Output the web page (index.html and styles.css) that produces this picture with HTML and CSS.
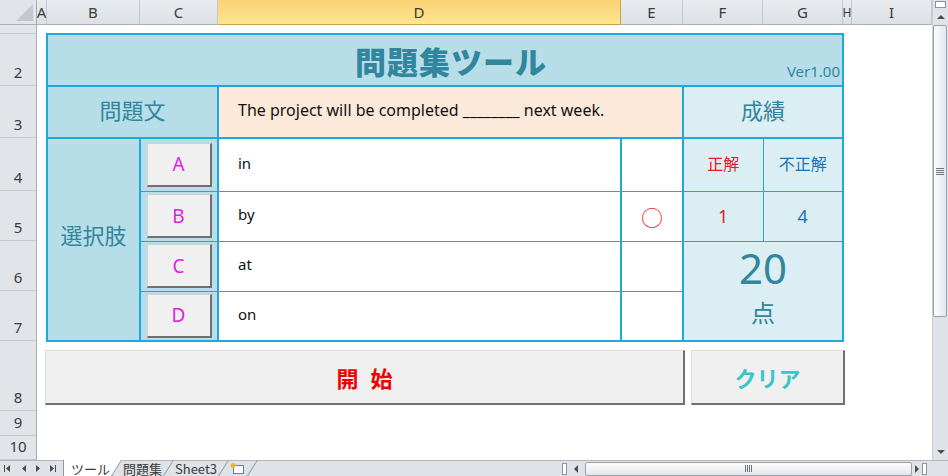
FILE: index.html
```html
<!DOCTYPE html>
<html lang="ja">
<head>
    <meta charset="UTF-8">
    <title>問題集ツール</title>
    <link rel="stylesheet" href="styles.css">
</head>
<body>
    <div class="window">
        <div class="sheet">
            <!-- column headers -->
            <div class="corner"><span class="corner-tri"></span></div>
            <div class="col-head">A</div>
            <div class="col-head">B</div>
            <div class="col-head">C</div>
            <div class="col-head active">D</div>
            <div class="col-head">E</div>
            <div class="col-head">F</div>
            <div class="col-head">G</div>
            <div class="col-head narrow">H</div>
            <div class="col-head">I</div>

            <!-- row headers -->
            <div class="row-head"></div>
            <div class="row-head">2</div>
            <div class="row-head">3</div>
            <div class="row-head">4</div>
            <div class="row-head">5</div>
            <div class="row-head">6</div>
            <div class="row-head">7</div>
            <div class="row-head">8</div>
            <div class="row-head">9</div>
            <div class="row-head">10</div>

            <table class="tool">
                <colgroup>
                    <col style="width: 93px">
                    <col style="width: 78px">
                    <col style="width: 403px">
                    <col style="width: 62px">
                    <col style="width: 80px">
                    <col style="width: 80px">
                </colgroup>
                <tr class="r-title">
                    <td colspan="6" class="title-cell">
                        <div class="title-box">
                            <span class="title">問題集ツール</span>
                            <span class="ver">Ver1.00</span>
                        </div>
                    </td>
                </tr>
                <tr class="r-question">
                    <td colspan="2" class="label thick">問題文</td>
                    <td colspan="2" class="question thick">The project will be completed ________ next week.</td>
                    <td colspan="2" class="label light">成績</td>
                </tr>
                <tr class="r-opt first">
                    <td rowspan="4" class="label choices thick">選択肢</td>
                    <td class="pick-cell thick"><button class="pick">A</button></td>
                    <td class="answer thick">in</td>
                    <td class="mark thick"></td>
                    <td class="result ok">正解</td>
                    <td class="result ng">不正解</td>
                </tr>
                <tr class="r-opt">
                    <td class="pick-cell thick"><button class="pick">B</button></td>
                    <td class="answer thick">by</td>
                    <td class="mark thick">○</td>
                    <td class="result ok count">1</td>
                    <td class="result ng count">4</td>
                </tr>
                <tr class="r-opt">
                    <td class="pick-cell thick"><button class="pick">C</button></td>
                    <td class="answer thick">at</td>
                    <td class="mark thick"></td>
                    <td rowspan="2" colspan="2" class="score">
                        <div class="score-box">
                            <span class="score-num">20</span>
                            <span class="score-unit">点</span>
                        </div>
                    </td>
                </tr>
                <tr class="r-opt">
                    <td class="pick-cell thick"><button class="pick">D</button></td>
                    <td class="answer thick">on</td>
                    <td class="mark thick"></td>
                </tr>
            </table>

            <div class="action-bar">
                <button class="big-button start">開始</button>
                <button class="big-button clear">クリア</button>
            </div>
        </div>

        <div class="vscroll">
            <div class="split-v"></div>
            <div class="arrow-box"><span class="tri-up"></span></div>
            <div class="thumb-v"><span class="grip-v"></span></div>
            <div class="track"></div>
            <div class="arrow-box"><span class="tri-down"></span></div>
        </div>
    </div>

    <div class="tabbar">
        <svg class="tab-nav" width="62" height="16" viewBox="0 0 62 16">
            <g fill="#4a4a4a">
                <rect x="4" y="5" width="1" height="7"/>
                <path d="M10 5v7l-4-3.5z"/>
                <path d="M26 5v7l-4-3.5z"/>
                <path d="M36 5v7l4-3.5z"/>
                <path d="M50 5v7l4-3.5z"/>
                <rect x="55" y="5" width="1" height="7"/>
            </g>
        </svg>
        <div class="tabs">
            <span class="tab active">ツール</span>
            <span class="tab">問題集</span>
            <span class="tab">Sheet3</span>
            <span class="tab new-tab">
                <svg width="16" height="13" viewBox="0 0 16 13">
                    <rect x="4.5" y="3.5" width="10" height="8" fill="#fff" stroke="#6a7f95"/>
                    <circle cx="4" cy="3.5" r="2.5" fill="#f2b632"/>
                </svg>
            </span>
        </div>
        <div class="hscroll">
            <span class="split-h"></span>
            <span class="arrow-h"><span class="tri-left"></span></span>
            <span class="thumb-h"><span class="grip-h"></span></span>
            <span class="track"></span>
            <span class="arrow-h small"><span class="tri-right"></span></span>
            <span class="split-h end"></span>
        </div>
        <div class="scroll-corner"></div>
    </div>
</body>
</html>
```

FILE: styles.css
```css
* {
    box-sizing: border-box;
}

html, body {
    margin: 0;
    padding: 0;
}

body {
    width: 948px;
    height: 476px;
    overflow: hidden;
    background: #fff;
    font-family: "Noto Sans", "Noto Sans CJK JP", sans-serif;
    color: #222;
}

.window {
    display: flex;
    height: 460px;
}

/* spreadsheet grid */
.sheet {
    flex: 1;
    display: grid;
    grid-template-columns: 37px 10px 93px 78px 403px 62px 80px 80px 9px 1fr;
    grid-template-rows: 25px 9px 52px 52px 53px 50px 50px 50px 70px 25px 24px;
    background: #fff;
}

.corner {
    display: flex;
    align-items: flex-end;
    justify-content: flex-end;
    padding: 0 3px 3px 0;
    background: #e1e4e9;
    border-right: 1px solid #a9afb7;
    border-bottom: 1px solid #a9afb7;
}

.corner-tri {
    width: 0;
    height: 0;
    border-left: 17px solid transparent;
    border-bottom: 17px solid #c3c7cd;
}

.col-head {
    display: flex;
    align-items: center;
    justify-content: center;
    overflow: hidden;
    background: linear-gradient(#e8ebef, #dde1e6);
    border-right: 1px solid #c3c8cf;
    border-bottom: 1px solid #a9afb7;
    font-size: 15px;
    color: #3b3b3b;
}

.col-head.narrow {
    font-size: 12px;
}

.col-head.active {
    background: linear-gradient(#f9d275, #fee690);
    border-right-color: #c9a24a;
    border-bottom-color: #c9a24a;
}

.row-head {
    grid-column: 1;
    display: flex;
    align-items: flex-end;
    justify-content: center;
    padding-bottom: 3px;
    line-height: 20px;
    background: #e1e4e9;
    border-right: 1px solid #a9afb7;
    border-bottom: 1px solid #c6cad0;
    font-size: 15px;
    color: #3b3b3b;
}

/* the tool form */
.tool {
    grid-column: 3 / 9;
    grid-row: 3 / 9;
    width: calc(100% + 2px);
    margin: -1px 0 0 -1px;
    border-collapse: collapse;
    table-layout: fixed;
    border: 2px solid #1ea8dc;
}

.tool td {
    padding: 0;
    border: 1px solid #1ea8dc;
}

.tool td.thick {
    border-right-width: 2px;
}

.r-title td,
.r-question td {
    border-bottom-width: 2px;
}

.r-title { height: 52px; }
.r-question { height: 52px; }
.r-opt { height: 50px; }
.r-opt.first { height: 53px; }

.title-cell {
    background: #b7dee8;
}

.title-box {
    display: grid;
    height: 50px;
}

.title-box > span {
    grid-area: 1 / 1;
}

.title {
    justify-self: center;
    align-self: center;
    padding-left: 12px;
    font-family: "Noto Sans CJK JP", sans-serif;
    font-size: 31px;
    font-weight: 800;
    letter-spacing: 1px;
    color: #31859c;
}

.ver {
    justify-self: end;
    align-self: end;
    padding: 0 2px 6px 0;
    font-size: 15px;
    line-height: 16px;
    color: #31859c;
}

.label {
    padding-bottom: 7px !important;
    background: #b7dee8;
    text-align: center;
    font-family: "Noto Sans CJK JP", sans-serif;
    font-size: 22px;
    color: #31859c;
}

.label.choices {
    padding-bottom: 12px !important;
}

.label.light {
    background: #daeef3;
}

.question {
    background: #fde9d9;
    padding: 0 0 5px 19px !important;
    font-size: 16px;
    color: #111;
}

.pick-cell {
    background: #b7dee8;
}

.pick {
    display: block;
    width: 65px;
    height: 44px;
    margin: 0 auto;
    padding: 0;
    background: #f0f0f0;
    border: 1px solid #d2d2d2;
    border-right: 2px solid #6f6f6f;
    border-bottom: 2px solid #6f6f6f;
    font-family: "Noto Sans", sans-serif;
    font-size: 19px;
    color: #e01ee4;
}

.answer {
    background: #fff;
    padding: 0 0 4px 19px !important;
    font-size: 15px;
    color: #111;
}

.mark {
    background: #fff;
    text-align: center;
    font-family: "Noto Sans CJK JP", sans-serif;
    font-size: 22px;
    color: #e5262c;
}

.result {
    padding-bottom: 4px !important;
    background: #daeef3;
    text-align: center;
    font-family: "Noto Sans CJK JP", sans-serif;
    font-size: 16px;
}

.result.count {
    padding-bottom: 0 !important;
    font-family: "Noto Sans", sans-serif;
    font-size: 18px;
}

.ok { color: #e0202a; }
.ng { color: #1f72b2; }

.score {
    background: #daeef3;
}

.score-box {
    display: flex;
    flex-direction: column;
    align-items: center;
    gap: 8px;
    padding-bottom: 10px;
    color: #31859c;
}

.score-num {
    font-size: 42px;
    line-height: 44px;
}

.score-unit {
    font-family: "Noto Sans CJK JP", sans-serif;
    font-size: 24px;
    line-height: 28px;
}

/* row 8 buttons */
.action-bar {
    grid-column: 3 / 9;
    grid-row: 9 / 10;
    display: flex;
    gap: 6px;
    margin-left: -2px;
    padding-top: 9px;
}

.big-button {
    flex: none;
    height: 55px;
    padding: 0;
    background: #f0f0f0;
    border: 1px solid #dcdcdc;
    border-right: 2px solid #6f6f6f;
    border-bottom: 2px solid #6f6f6f;
    font-family: "Noto Sans CJK JP", sans-serif;
    font-size: 22px;
    font-weight: 700;
}

.start {
    width: 640px;
    padding-left: 12px;
    letter-spacing: 12px;
    color: #f00000;
}

.clear {
    width: 154px;
    color: #38c6c8;
}

/* scrollbars */
.vscroll {
    width: 16px;
    display: flex;
    flex-direction: column;
    background: #dfe3e8;
    border-left: 1px solid #c9ced5;
}

.split-v {
    height: 7px;
    margin: 1px 2px 0;
    background: #fff;
    border: 1px solid #8d949c;
}

.arrow-box {
    height: 17px;
    display: flex;
    align-items: center;
    justify-content: center;
}

.tri-up {
    border-left: 4px solid transparent;
    border-right: 4px solid transparent;
    border-bottom: 4px solid #4d4d4d;
}

.tri-down {
    border-left: 4px solid transparent;
    border-right: 4px solid transparent;
    border-top: 4px solid #4d4d4d;
}

.tri-left {
    border-top: 4px solid transparent;
    border-bottom: 4px solid transparent;
    border-right: 4px solid #4d4d4d;
}

.tri-right {
    border-top: 4px solid transparent;
    border-bottom: 4px solid transparent;
    border-left: 4px solid #4d4d4d;
}

.thumb-v {
    height: 292px;
    margin: 0 1px 0 0;
    display: flex;
    align-items: center;
    justify-content: center;
    background: linear-gradient(90deg, #fdfdfe, #e3e7ec);
    border: 1px solid #98a0a9;
    border-radius: 2px;
}

.grip-v {
    width: 8px;
    height: 7px;
    background: repeating-linear-gradient(#6d737a 0 1px, transparent 1px 2px);
}

.track {
    flex: 1;
}

.tabbar {
    height: 16px;
    display: flex;
    align-items: stretch;
    background: #dfe3e8;
    border-top: 1px solid #b2b8c0;
}

.tab-nav {
    flex: none;
    margin-top: -1px;
}

.tabs {
    width: 498px;
    display: flex;
    align-items: stretch;
    padding-left: 1px;
}

.tab {
    position: relative;
    display: flex;
    align-items: center;
    padding: 0 7px;
    margin-right: -1px;
    font-family: "Noto Sans CJK JP", sans-serif;
    font-size: 13px;
    line-height: 14px;
    color: #3a3a3a;
    z-index: 1;
}

.tab::before {
    content: "";
    position: absolute;
    inset: -1px 0 0 0;
    transform: skewX(-32deg);
    border-right: 1px solid #8e959e;
    z-index: -1;
}

.tab.active {
    padding-left: 8px;
}

.tab.active::before {
    background: #fff;
    border-left: 1px solid #8e959e;
    transform: none;
    inset: -1px 4px 0 0;
}

.tab.active::after {
    content: "";
    position: absolute;
    top: -1px;
    bottom: 0;
    right: 0;
    width: 10px;
    background: #fff;
    border-right: 1px solid #8e959e;
    transform: skewX(-32deg);
    z-index: -1;
}

.new-tab {
    padding: 0 8px 0 6px;
}

.hscroll {
    flex: 1;
    display: flex;
    align-items: center;
}

.split-h {
    width: 5px;
    height: 12px;
    margin-left: 2px;
    background: #fff;
    border: 1px solid #8d949c;
}

.split-h.end {
    margin: 0 3px 0 1px;
}

.arrow-h {
    width: 17px;
    height: 14px;
    display: flex;
    align-items: center;
    justify-content: center;
}

.arrow-h.small {
    width: 9px;
}

.thumb-h {
    width: 327px;
    height: 14px;
    margin-left: 1px;
    display: flex;
    align-items: center;
    justify-content: center;
    background: linear-gradient(#fdfdfe, #e3e7ec);
    border: 1px solid #98a0a9;
    border-radius: 2px;
}

.grip-h {
    width: 7px;
    height: 7px;
    background: repeating-linear-gradient(90deg, #6d737a 0 1px, transparent 1px 2px);
}

.scroll-corner {
    width: 18px;
    background: #dfe3e8;
}
```
